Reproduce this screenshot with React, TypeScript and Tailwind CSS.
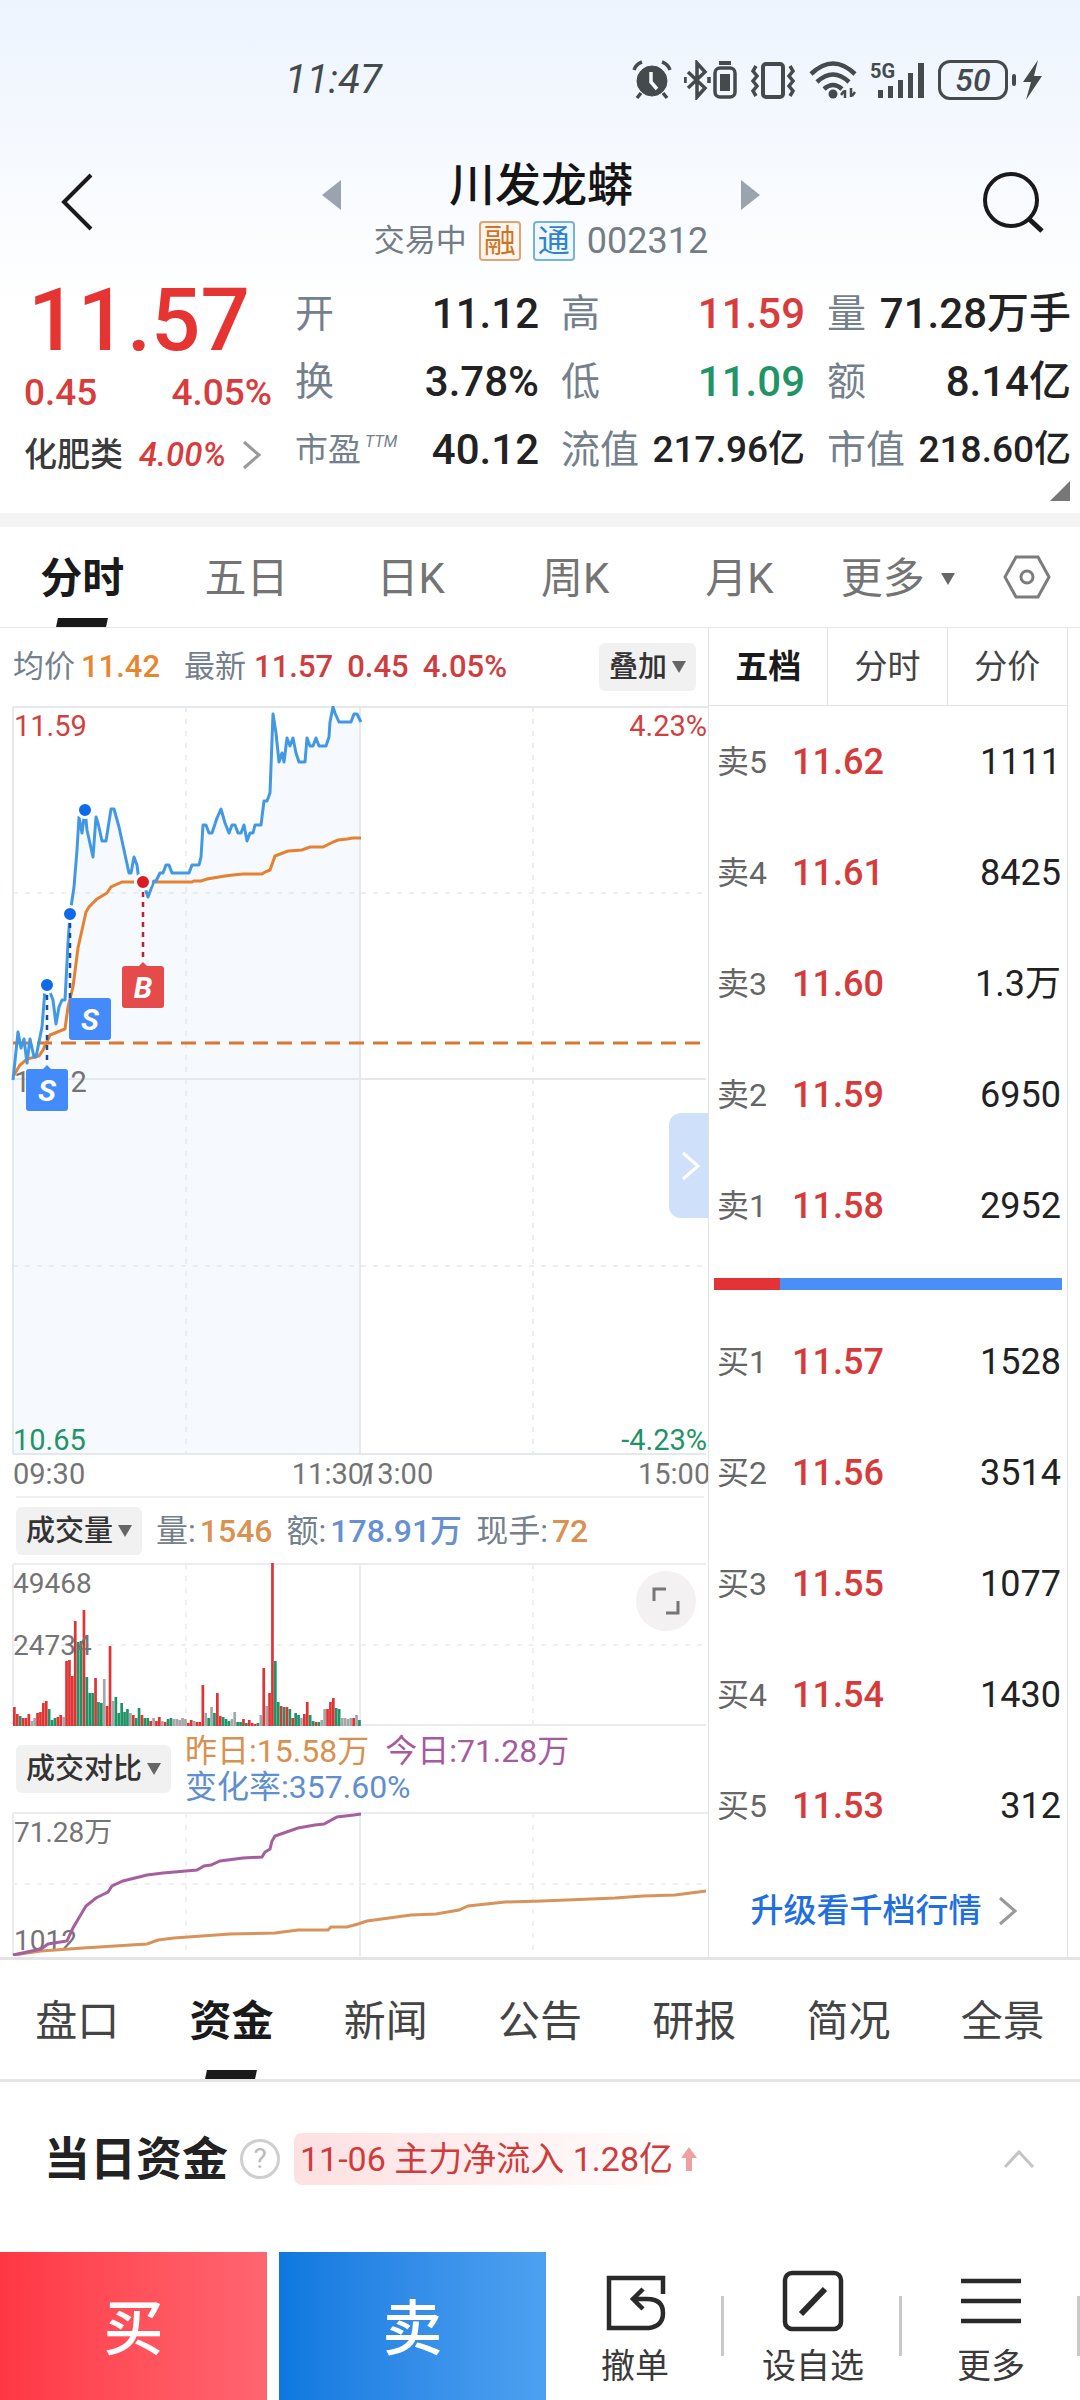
import { ReactNode } from "react";

const RED = "#e03434";
const GREEN = "#1f9467";
const GREY = "#a6a6a6";

const stats = [
  { label: "开", value: "11.12", tone: "text-[#222]" },
  { label: "高", value: "11.59", tone: "text-[#d93c3c]" },
  { label: "量", value: "71.28万手", tone: "text-[#222]" },
  { label: "换", value: "3.78%", tone: "text-[#222]" },
  { label: "低", value: "11.09", tone: "text-[#1f9467]" },
  { label: "额", value: "8.14亿", tone: "text-[#222]" },
  { label: "市盈", sup: "TTM", value: "40.12", tone: "text-[#222]" },
  { label: "流值", value: "217.96亿", tone: "text-[#222]", small: true },
  { label: "市值", value: "218.60亿", tone: "text-[#222]", small: true },
];

const periods = ["分时", "五日", "日K", "周K", "月K"];
const sections = ["盘口", "资金", "新闻", "公告", "研报", "简况", "全景"];

const asks = [
  ["卖5", "11.62", "1111"],
  ["卖4", "11.61", "8425"],
  ["卖3", "11.60", "1.3万"],
  ["卖2", "11.59", "6950"],
  ["卖1", "11.58", "2952"],
];

const bids = [
  ["买1", "11.57", "1528"],
  ["买2", "11.56", "3514"],
  ["买3", "11.55", "1077"],
  ["买4", "11.54", "1430"],
  ["买5", "11.53", "312"],
];

const pricePoints =
  "13,374 18,326 21,342 24,333 27,357 30,333 34,351 36,351 42,321 45,284 47,279 50,286 53,294 56,318 59,301 62,294 65,294 68,237 70,208 74,181 77,144 79,111 82,127 85,104 87,124 93,151 96,111 98,117 102,135 106,135 111,103 114,103 119,121 124,144 129,167 131,167 134,151 137,159 140,183 143,176 148,191 154,175 156,175 160,167 163,167 166,159 169,159 172,167 189,167 192,159 199,159 201,151 203,119 206,119 209,127 212,127 217,112 221,103 225,117 229,127 232,119 235,119 238,127 241,127 244,119 247,135 250,127 253,127 255,119 261,119 264,95 267,95 270,87 273,8 276,27 279,56 282,47 284,56 287,32 290,40 293,32 296,47 299,56 305,56 307,32 310,40 313,40 316,32 319,40 326,40 329,31 330,16 333,1 335,7 339,16 351,16 354,8 357,8 361,16";

const averagePoints =
  "14,369 20,359 27,353 39,350 43,344 50,329 55,327 65,323 68,301 73,281 78,242 86,206 89,201 97,193 107,187 111,181 122,176 192,176 194,175 201,175 207,173 225,170 233,169 243,168 262,168 265,166 270,164 275,150 288,145 302,144 310,141 323,141 333,136 338,134 347,133 353,132 361,132";

const todayPoints =
  "13,143 41,137 48,132 67,129 73,116 80,104 86,94 96,86 102,83 108,80 112,74 123,69 147,63 163,61 197,58 204,54 211,53 220,49 243,46 262,45 265,40 270,37 272,29 275,24 298,16 315,13 324,12 337,5 354,3 361,2";

const yesterdayPoints =
  "13,143 41,139 83,136 147,132 158,128 174,126 230,122 275,121 298,118 328,118 331,115 347,115 358,112 367,109 411,103 436,102 459,98 468,94 505,90 542,89 615,86 643,84 675,83 706,79";

// one entry per minute: direction (r up, g down, n flat) and height
const volumes =
  "r19 r12 g10 r8 r8 r12 n5 n8 r13 r14 r23 r25 g17 g6 g8 r9 r11 n9 r65 r66 r50 r105 g84 g85 r116 g49 g33 g33 r48 g24 g23 n47 r20 r80 n25 g29 g13 g23 g14 g17 n13 r11 g8 g18 r11 g8 g8 r5 n8 r5 r9 n5 r4 g7 g8 n7 n7 n6 n8 n7 r3 r6 n5 r4 r4 r41 n13 g8 n19 g13 r33 r10 g9 g7 g5 n7 n14 g4 g4 r7 g3 r6 r3 r2 g3 n11 r58 n20 r33 r163 g65 g24 r20 g19 r19 g17 r8 g13 g11 n8 r12 r24 g11 g5 r4 g4 n6 n17 r17 r24 r28 g18 g17 n8 n8 n7 n8 r8 n11 g6"
    .split(" ")
    .map((v) => ({
      color: v[0] === "r" ? RED : v[0] === "g" ? GREEN : GREY,
      height: Number(v.slice(1)),
    }));

const Caret = () => (
  <svg width="14" height="12" viewBox="0 0 14 12" className="shrink-0" fill="#666">
    <path d="M0 0h14L7 12z" />
  </svg>
);

const Chevron = ({ color = "#999" }: { color?: string }) => (
  <svg width="20" height="32" viewBox="0 0 20 32" className="shrink-0" fill="none" stroke={color} strokeWidth="3">
    <path d="M2 3l15 13L2 29" />
  </svg>
);

const Picker = ({ name, label }: { name: string; label: string }) => (
  <label className="flex h-12 shrink-0 items-center gap-1 rounded-md bg-[#f1f1f1] px-2.5">
    <select
      aria-label={name}
      className="appearance-none bg-transparent text-[29px] leading-9 font-medium text-[#333] outline-none"
    >
      <option>{label}</option>
    </select>
    <Caret />
  </label>
);

const StatusBar = () => (
  <div className="flex h-12 items-center justify-between pr-9 pl-[285px] text-[#454a4d]">
    <span className="text-[40px] leading-10 italic">11:47</span>
    <div className="flex items-center gap-3">
      <svg width="40" height="40" viewBox="0 0 40 40" fill="none" stroke="currentColor">
        <circle cx="20" cy="21" r="15" fill="currentColor" />
        <path d="M2 10Q4 4 10 2M30 2q6 2 8 8M9 33l-4 5M31 33l4 5" strokeWidth="3.5" />
        <path d="M19 12v10l6 7" stroke="#f5f9fe" strokeWidth="3.5" />
      </svg>
      <svg width="54" height="40" viewBox="0 0 54 40" fill="none" stroke="currentColor" strokeWidth="3.5">
        <path d="M4 12l17 16-8 9V3l8 9L4 28M1 17v6M25 17v6" />
        <rect x="31" y="8" width="20" height="29" rx="5" />
        <rect x="36" y="14" width="10" height="17" fill="currentColor" stroke="none" />
        <path d="M35 3h12" strokeWidth="4" />
      </svg>
      <svg width="46" height="40" viewBox="0 0 46 40" fill="none" stroke="currentColor" strokeWidth="3.5">
        <rect x="13" y="4" width="20" height="33" rx="3" strokeWidth="4" />
        <path d="M6 6l-3 5 4 5-4 5 4 5-4 5 3 5M40 6l3 5-4 5 4 5-4 5 4 5-3 5" />
      </svg>
      <svg width="50" height="40" viewBox="0 0 50 40" fill="none" stroke="currentColor" strokeWidth="4.5">
        <path d="M3 14Q25-7 47 14M9 22q16-15 32 0M16 29q9-8 18 0" />
        <circle cx="25" cy="34" r="4.5" fill="currentColor" stroke="none" />
        <path d="M37 30v8M36 31l-3 4M43 37v-9M44 36l3-4" strokeWidth="2.5" />
      </svg>
      <svg width="56" height="40" viewBox="0 0 56 40" fill="currentColor">
        <text x="0" y="18" className="text-[20px] font-bold">5G</text>
        <path d="M8 30h5v8H8zM18 26h5v12h-5zM28 20h5v18h-5zM38 13h5v25h-5zM48 3h6v35h-6z" />
      </svg>
      <div className="flex items-center gap-1">
        <span className="flex h-10 w-[70px] items-center justify-center rounded-xl border-3 border-current text-[32px] leading-8 font-medium italic">
          50
        </span>
        <span className="h-3 w-1 rounded bg-current" />
        <svg width="24" height="40" viewBox="0 0 24 40" fill="currentColor">
          <path d="M18 0L3 22h8L6 40l16-24h-8z" />
        </svg>
      </div>
    </div>
  </div>
);

const Header = () => (
  <div className="mt-[53px] flex items-start justify-between pr-[34px] pl-[60px]">
    <button aria-label="返回" className="flex h-[90px] w-10 items-center">
      <svg width="34" height="60" viewBox="0 0 34 60" fill="none" stroke="#1a1a1a" strokeWidth="4">
        <path d="M31 3L4 30l27 27" />
      </svg>
    </button>
    <div className="flex items-start gap-[18px]">
      <button aria-label="上一只" className="flex h-[76px] w-5 items-center">
        <svg width="20" height="30" viewBox="0 0 20 30" fill="#9ba4ae">
          <path d="M19 0v30L0 15z" />
        </svg>
      </button>
      <div className="flex w-[362px] flex-col items-center gap-2">
        <h1 className="text-[46px] leading-[56px] font-medium text-[#151515]">川发龙蟒</h1>
        <div className="flex h-10 items-center gap-3 text-[36px] leading-10 text-[#747c85]">
          <span className="text-[31px]">交易中</span>
          <span className="flex h-10 w-[42px] items-center justify-center rounded border-2 border-[#e2a373] bg-[#fef6ee] text-[32px] leading-9 text-[#cf7224]">
            融
          </span>
          <span className="flex h-10 w-[42px] items-center justify-center rounded border-2 border-[#77b1e0] bg-[#f0f8ff] text-[32px] leading-9 text-[#2f82cb]">
            通
          </span>
          <span>002312</span>
        </div>
      </div>
      <button aria-label="下一只" className="flex h-[76px] w-5 items-center">
        <svg width="20" height="30" viewBox="0 0 20 30" fill="#9ba4ae">
          <path d="M1 0v30l19-15z" />
        </svg>
      </button>
    </div>
    <button aria-label="搜索" className="flex h-[90px] items-center">
      <svg width="64" height="64" viewBox="0 0 64 64" fill="none" stroke="#1a1a1a" strokeWidth="4">
        <circle cx="29" cy="30" r="26" />
        <path d="M47 49l13 12" strokeWidth="5" />
      </svg>
    </button>
  </div>
);

const Quote = () => (
  <section className="relative mt-[19px] flex gap-[23px] pr-[9px] pb-[29px] pl-6">
    <div className="w-[248px] shrink-0 text-[#d93c3c]">
      <p className="h-20 pl-1 text-[87px] leading-20 font-medium text-[#e53431]">11.57</p>
      <p className="flex h-[66px] items-center justify-between text-[37px] leading-10 font-medium">
        <span>0.45</span>
        <span>4.05%</span>
      </p>
      <a href="#sector" className="flex h-[58px] items-center gap-4 text-[33px] leading-10">
        <span className="font-medium text-[#3a3a3a]">化肥类</span>
        <span className="font-medium italic">4.00%</span>
        <Chevron />
      </a>
    </div>
    <dl className="grid flex-1 grid-cols-3 gap-x-[22px]">
      {stats.map((s) => (
        <div key={s.label} className="flex h-[67px] items-center justify-between whitespace-nowrap">
          <dt className={`flex leading-12 text-[#74808b] ${s.sup ? "text-[33px]" : "text-[39px]"}`}>
            {s.label}
            {s.sup && <sup className="top-0 pl-1 text-[16px] leading-8 italic">{s.sup}</sup>}
          </dt>
          <dd className={`leading-12 font-medium ${s.tone} ${s.small ? "text-[37px]" : "text-[42px]"}`}>{s.value}</dd>
        </div>
      ))}
    </dl>
    <svg width="20" height="20" viewBox="0 0 20 20" fill="#777" className="absolute right-2.5 bottom-3">
      <path d="M20 0v20H0z" />
    </svg>
  </section>
);

const ActiveMark = () => <span className="absolute bottom-0 left-1/2 h-[9px] w-[50px] -translate-x-1/2 -skew-x-12 bg-[#1a1a1a]" />;

const PeriodTabs = () => (
  <nav className="grid h-[101px] grid-cols-[164fr_164fr_164fr_164fr_164fr_152fr_106fr] border-b border-[#e8e8e8] text-[42px] leading-[50px] text-[#747474]">
    {periods.map((p, i) => (
      <button key={p} className={i === 0 ? "relative pt-1 font-bold text-[#1a1a1a]" : "relative pt-1"}>
        {p}
        {i === 0 && <ActiveMark />}
      </button>
    ))}
    <button className="flex items-center justify-center gap-4 pt-1">
      更多
      <Caret />
    </button>
    <button aria-label="设置" className="flex items-center justify-center">
      <svg width="48" height="44" viewBox="0 0 48 44" fill="none" stroke="#7c7c7c" strokeWidth="3">
        <path d="M13 2h22l11 20-11 20H13L2 22z" />
        <circle cx="24" cy="22" r="6" />
      </svg>
    </button>
  </nav>
);

const Marker = ({ x, y, color, children }: { x: number; y: number; color: string; children: ReactNode }) => (
  <g>
    <rect x={x} y={y} width="42" height="42" rx="3" fill={color} />
    <text x={x + 21} y={y + 32} textAnchor="middle" fill="#fff" className="text-[30px] font-bold italic">
      {children}
    </text>
  </g>
);

const PriceChart = () => (
  <div className="relative">
    <svg viewBox="0 0 708 790" className="block w-full text-[29px]">
      <polygon points={`${pricePoints} 361,748 13,748`} fill="#f6f9fe" />
      <g stroke="#e6e9ec" strokeWidth="2" fill="none">
        <path d="M13 1h695M13 373h693M13 748h693M13 1v747M360 1v747" />
        <path d="M13 187h693M13 560h693M186 1v747M533 1v747" strokeWidth="1.5" strokeDasharray="5 7" />
      </g>
      <g fill="#747474">
        <text x="14" y="30" fill="#d13f3f">11.59</text>
        <text x="707" y="30" textAnchor="end" fill="#d13f3f">4.23%</text>
        <text x="14" y="386">11.12</text>
        <text x="13" y="744" fill={GREEN}>10.65</text>
        <text x="707" y="744" textAnchor="end" fill={GREEN}>-4.23%</text>
        <text x="13" y="778">09:30</text>
        <text x="364" y="778" textAnchor="end">11:30</text>
        <text x="362" y="778">/</text>
        <text x="361" y="778">13:00</text>
        <text x="638" y="778">15:00</text>
      </g>
      <path d="M13 337h693" stroke="#d9762f" strokeWidth="3" strokeDasharray="15 9" />
      <polyline points={averagePoints} fill="none" stroke="#e5812f" strokeWidth="3" />
      <polyline points={pricePoints} fill="none" stroke="#4298e3" strokeWidth="3" strokeLinejoin="round" />
      <g strokeWidth="2.5" strokeDasharray="5 5">
        <path d="M47 289v70M70 217v75" stroke="#184ba0" />
        <path d="M143 186v70" stroke="#c4202c" />
      </g>
      <g stroke="#fff" strokeWidth="3">
        <circle cx="85" cy="104" r="7.5" fill="#0d6ae8" />
        <circle cx="70" cy="208" r="7.5" fill="#0d6ae8" />
        <circle cx="47" cy="279" r="7.5" fill="#0d6ae8" />
        <circle cx="143" cy="176" r="7.5" fill="#dc1c23" />
      </g>
      <path d="M43 363l4-4 4 4z" fill="#438afa" />
      <path d="M139 260l4-4 4 4z" fill="#e64b4b" />
      <Marker x={26} y={363} color="#438afa">S</Marker>
      <Marker x={69} y={292} color="#438afa">S</Marker>
      <Marker x={122} y={260} color="#e64b4b">B</Marker>
    </svg>
    <button
      aria-label="展开"
      className="absolute top-[407px] right-0 flex h-[105px] w-[39px] items-center justify-center rounded-l-xl bg-[#cfe0fa] pl-1"
    >
      <Chevron color="#fff" />
    </button>
  </div>
);

const VolumeChart = () => (
  <div className="relative">
    <svg viewBox="0 0 708 163" className="block w-full text-[28px]">
      <g stroke="#ececef" strokeWidth="2" fill="none">
        <path d="M13 1h693M13 162h693M13 1v161M360 1v161" />
        <path d="M13 82h693M186 1v161M533 1v161" strokeWidth="1.5" strokeDasharray="5 7" />
      </g>
      {volumes.map((v, i) => (
        <rect key={i} x={13 + i * 2.9} y={163 - v.height} width="2.7" height={v.height} fill={v.color} />
      ))}
      <g fill="#747474">
        <text x="13" y="30">49468</text>
        <text x="13" y="92">24734</text>
      </g>
    </svg>
    <button
      aria-label="全屏"
      className="absolute top-2 right-3 flex size-[60px] items-center justify-center rounded-full bg-[#f3f1f2]"
    >
      <svg width="30" height="30" viewBox="0 0 30 30" fill="none" stroke="#777" strokeWidth="3">
        <path d="M3 15V3h12M27 15v12H15" />
      </svg>
    </button>
  </div>
);

const CompareChart = () => (
  <svg viewBox="0 0 708 144" className="block w-full text-[28px]">
    <g stroke="#ececef" strokeWidth="2" fill="none">
      <path d="M13 1h695M13 1v143M360 1v143" />
      <path d="M13 72h693M186 1v143M533 1v143" strokeWidth="1.5" strokeDasharray="5 7" />
    </g>
    <g fill="#747474">
      <text x="14" y="30">71.28万</text>
      <text x="14" y="138">1012</text>
    </g>
    <polyline points={yesterdayPoints} fill="none" stroke="#d8935a" strokeWidth="3" />
    <polyline points={todayPoints} fill="none" stroke="#a55f9f" strokeWidth="3" />
  </svg>
);

const Charts = () => (
  <div className="min-w-0 flex-1">
    <div className="flex h-[78px] items-center pr-3 pl-[13px] text-[31px] leading-10 font-medium whitespace-nowrap text-[#cf3d3f]">
      <span className="font-normal text-[#74808b]">均价</span>
      <span className="pl-1.5 text-[#e8862e]">11.42</span>
      <span className="pl-6 font-normal text-[#74808b]">最新</span>
      <span className="pl-2">11.57</span>
      <span className="pl-3.5">0.45</span>
      <span className="pl-3.5">4.05%</span>
      <span className="flex-1" />
      <Picker name="叠加" label="叠加" />
    </div>
    <PriceChart />
    <div className="mx-4 mr-1 flex h-[67px] items-center border-t-2 border-[#f0f0f0] text-[32px] leading-10 font-medium whitespace-nowrap text-[#74808b]">
      <Picker name="指标" label="成交量" />
      <span className="pl-3.5 font-normal">量:</span>
      <span className="pl-1 text-[#db9150]">1546</span>
      <span className="pl-3.5 font-normal">额:</span>
      <span className="pl-1 text-[#6690d2]">178.91万</span>
      <span className="pl-3.5 font-normal">现手:</span>
      <span className="pl-1 text-[#db9150]">72</span>
    </div>
    <VolumeChart />
    <div className="flex h-[86px] items-center gap-3.5 pl-4">
      <Picker name="对比指标" label="成交对比" />
      <p className="text-[32px] leading-9 whitespace-nowrap">
        <span className="text-[#d8914f]">昨日:15.58万</span>
        <span className="pl-4 text-[#a85aa0]">今日:71.28万</span>
        <br />
        <span className="text-[#5f8fd0]">变化率:357.60%</span>
      </p>
    </div>
    <CompareChart />
  </div>
);

const Depth = ({ rows, name }: { rows: string[][]; name: string }) => (
  <table aria-label={name} className="w-full table-fixed text-[36px] leading-10">
    <tbody>
      {rows.map(([level, price, volume]) => (
        <tr key={level} className="h-[111px]">
          <th scope="row" className="w-[83px] pl-2 text-left text-[32px] font-normal text-[#666]">
            {level}
          </th>
          <td className="font-medium text-[#d63a3a]">{price}</td>
          <td className="pr-1.5 text-right text-[#222]">{volume}</td>
        </tr>
      ))}
    </tbody>
  </table>
);

const OrderBook = () => (
  <aside className="mr-3 w-[360px] shrink-0 border-x border-[#e2e2e2]">
    <div className="grid h-[78px] grid-cols-3 divide-x divide-[#e2e2e2] border-b border-[#e2e2e2] text-[33px] leading-10 text-[#444]">
      <button className="font-bold text-[#1a1a1a]">五档</button>
      <button>分时</button>
      <button>分价</button>
    </div>
    <Depth rows={asks} name="卖盘" />
    <div className="mx-[5px] mt-[17px] mb-4 flex h-3 bg-[#4a8ff8]">
      <div className="w-[19%] bg-[#e43336]" />
    </div>
    <Depth rows={bids} name="买盘" />
    <a href="#level2" className="flex h-24 items-center justify-center gap-4 pt-1 pr-2 text-[33px] leading-10 font-medium text-[#1f6fe0]">
      升级看千档行情
      <Chevron />
    </a>
  </aside>
);

const SectionTabs = () => (
  <nav className="grid h-[125px] grid-cols-7 border-y-3 border-[#e4e4e4] text-[42px] leading-[50px] text-[#444]">
    {sections.map((s) => (
      <button key={s} className={s === "资金" ? "relative pt-1 font-bold text-[#1a1a1a]" : "relative pt-1"}>
        {s}
        {s === "资金" && <ActiveMark />}
      </button>
    ))}
  </nav>
);

const Funds = () => (
  <section className="flex h-[170px] items-center pr-11 pb-4 pl-11">
    <h2 className="text-[46px] leading-[52px] font-bold text-[#222]">当日资金</h2>
    <button aria-label="说明" className="ml-3 flex size-10 items-center justify-center rounded-full border-3 border-[#cfcfcf] text-[28px] leading-8 text-[#bbb]">
      ?
    </button>
    <p className="ml-3.5 flex h-[52px] items-center gap-2 rounded-lg bg-gradient-to-r from-[#fee0e1] to-white pl-1.5 text-[34px] leading-10 text-[#d03b3b]">
      11-06 主力净流入 1.28亿
      <svg width="16" height="24" viewBox="0 0 16 24" fill="#f0a0a0">
        <path d="M8 0l8 11h-5v13H5V11H0z" />
      </svg>
    </p>
    <button aria-label="收起" className="ml-auto">
      <svg width="34" height="20" viewBox="0 0 34 20" fill="none" stroke="#c4c4c4" strokeWidth="3">
        <path d="M3 18L17 3l14 15" />
      </svg>
    </button>
  </section>
);

const Action = ({ label, children }: { label: string; children: ReactNode }) => (
  <button className="relative flex flex-col items-center pt-[18px] text-[34px] leading-10 text-[#3a3a3a]">
    <svg width="62" height="62" viewBox="0 0 62 62" fill="none" stroke="#2a2a2a" strokeWidth="4.5">
      {children}
    </svg>
    <span className="pt-3.5">{label}</span>
    <span className="absolute top-11 right-0 h-[60px] w-[3px] bg-[#c9c9c9]" />
  </button>
);

const TradeBar = () => (
  <footer className="flex h-[148px] gap-3 bg-white">
    <button className="flex-1 bg-gradient-to-r from-[#ff3644] to-[#ff6570] pt-2 text-[60px] font-medium text-white">买</button>
    <button className="flex-1 bg-gradient-to-r from-[#0c78df] to-[#4ea1f1] pt-2 text-[60px] font-medium text-white">卖</button>
    <div className="-ml-3 grid flex-2 grid-cols-3">
      <Action label="撤单">
        <path d="M59 24V8H5v50h40q14-2 14-15 0-14-16-14H29M39 19L29 29l10 10" />
      </Action>
      <Action label="设自选">
        <rect x="3" y="3" width="56" height="56" rx="7" />
        <path d="M19 44l24-25" strokeWidth="6" />
      </Action>
      <Action label="更多">
        <path d="M1 11h60M1 31h60M1 51h60" />
      </Action>
    </div>
  </footer>
);

export default function App() {
  return (
    <main className='min-h-screen bg-white font-[Roboto,"Noto_Sans_CJK_SC",sans-serif]'>
      <header className="bg-gradient-to-b from-[#edf4fe] to-white to-60% pt-14">
        <StatusBar />
        <Header />
        <Quote />
      </header>
      <div className="h-3.5 bg-[#f4f4f4]" />
      <PeriodTabs />
      <div className="flex">
        <Charts />
        <OrderBook />
      </div>
      <SectionTabs />
      <Funds />
      <TradeBar />
    </main>
  );
}
